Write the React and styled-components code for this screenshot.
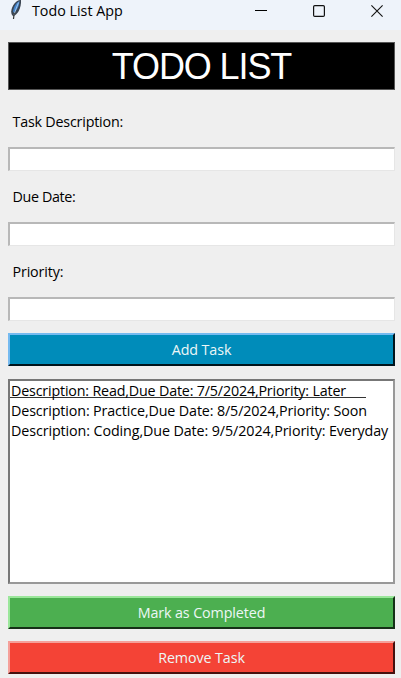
import React from 'react';
import styled, { createGlobalStyle } from 'styled-components';

const GlobalStyle = createGlobalStyle`
  * { box-sizing: border-box; }
  body { margin: 0; overflow: hidden; background: #efefef; }
`;

const Window = styled.div`
  width: 401px;
  height: 678px;
  overflow: hidden;
  background: #efefef;
  color: #000;
  font: 14.3px/20px "Open Sans", "Noto Sans", sans-serif;
`;

const TitleBar = styled.header`
  display: flex;
  align-items: flex-start;
  height: 30px;
  padding-left: 8px;
  background: #eef3fa;
`;

const AppTitle = styled.span`
  flex: 1;
  padding-left: 8px;
  font-size: 14.3px;
  line-height: 21px;
`;

const Controls = styled.div`
  display: flex;
  gap: 46px;
  padding: 5px 18.5px 0 0;
  svg { display: block; }
`;

const Content = styled.main`
  display: flex;
  flex-direction: column;
  padding: 12px 6px 0 8px;
`;

const Heading = styled.h1`
  margin: 0;
  height: 48px;
  border: 1px solid #555;
  background: #000;
  color: #fff;
  font: 36px/48px "Liberation Sans", Arial, sans-serif;
  letter-spacing: -1.1px;
  text-align: center;
`;

const Fields = styled.section`
  display: flex;
  flex-direction: column;
  gap: 16px;
  height: 243px;
  padding-top: 22px;
`;

const Field = styled.label`
  display: flex;
  flex-direction: column;
`;

const FieldLabel = styled.span`
  height: 35px;
  padding-left: 4.5px;
  letter-spacing: ${(p) => p.$tracking}px;
`;

const Input = styled.input`
  width: 100%;
  height: 24px;
  padding: 0 4px;
  border: solid;
  border-width: 2px 1px 1px 2px;
  border-color: #b8b8b8 #e6e6e6 #e6e6e6 #b8b8b8;
  border-radius: 0;
  background: #fff;
  font: inherit;
  outline: none;
`;

const Button = styled.button`
  height: 33px;
  flex: none;
  padding: 0;
  border: 2px solid;
  border-color: ${(p) => `${p.$light} ${p.$dark} ${p.$dark} ${p.$light}`};
  border-radius: 0;
  background: ${(p) => p.$fill};
  color: #edf7f7;
  font: inherit;
  line-height: 28px;
  letter-spacing: ${(p) => p.$tracking}px;
  text-align: center;
`;

const TaskList = styled.ul`
  height: 205px;
  margin: 13px 0 12px;
  padding: 0;
  overflow: hidden;
  list-style: none;
  border: 2px solid;
  border-color: #777 #999 #999 #777;
  background: #fff;
`;

const Task = styled.li`
  width: fit-content;
  height: 20px;
  padding-left: 1px;
  white-space: pre;
  line-height: 20px;
  letter-spacing: ${(p) => p.$tracking}px;
`;

const ActiveTask = styled(Task)`
  width: 356px;
  height: 17px;
  margin-bottom: 3px;
  border-bottom: 1px solid #333;
`;

const Actions = styled.div`
  display: flex;
  flex-direction: column;
  gap: 12px;
`;

const Feather = () => (
  <svg width="16" height="22" viewBox="0 0 16 22">
    <path d="M12.5 0C8 0 3.5 6 3.2 11.5c0 2 .6 3.8 1.8 4.6C9.5 15 13.5 8 13 0Z" fill="#3b4552" />
    <path d="M11.6 1C8 3 5.2 7 5 12.5c3-1 6-5 6.6-11.5Z" fill="#4382cb" />
    <path d="M10.5 2.5 8 9l-2.2 6" stroke="#a9cdec" strokeWidth=".9" fill="none" />
    <path d="m6.2 13-.7 6" stroke="#333" strokeWidth="1.2" />
  </svg>
);

const fields = [
  { label: 'Task Description:', tracking: -0.2 },
  { label: 'Due Date:', tracking: -0.35 },
  { label: 'Priority:', tracking: -0.15 },
];

export default function App() {
  return (
    <>
      <GlobalStyle />
      <Window>
        <TitleBar>
          <Feather />
          <AppTitle>Todo List App</AppTitle>
          <Controls>
            <svg width="12" height="12"><path d="M0 5.5h12" stroke="#000" /></svg>
            <svg width="12" height="12"><rect x=".6" y=".6" width="10.8" height="10.8" rx="1.2" fill="none" stroke="#111" strokeWidth="1.2" /></svg>
            <svg width="12" height="12"><path d="m.4.4 11.2 11.2M11.6.4.4 11.6" stroke="#111" strokeWidth="1.1" /></svg>
          </Controls>
        </TitleBar>
        <Content>
          <Heading>TODO LIST</Heading>
          <Fields>
            {fields.map((f) => (
              <Field key={f.label}>
                <FieldLabel $tracking={f.tracking}>{f.label}</FieldLabel>
                <Input />
              </Field>
            ))}
          </Fields>
          <Button $fill="#008cba" $light="#75baf0" $dark="#00141c" $tracking={-0.1}>Add Task</Button>
          <TaskList>
            <ActiveTask $tracking={-0.18}>Description: Read,Due Date: 7/5/2024,Priority: Later</ActiveTask>
            <Task $tracking={-0.13}>Description: Practice,Due Date: 8/5/2024,Priority: Soon</Task>
            <Task $tracking={-0.1}>Description: Coding,Due Date: 9/5/2024,Priority: Everyday</Task>
          </TaskList>
          <Actions>
            <Button $fill="#4caf50" $light="#9be79b" $dark="#153017" $tracking={-0.1}>Mark as Completed</Button>
            <Button $fill="#f44336" $light="#f5a09a" $dark="#46100e" $tracking={-0.1}>Remove Task</Button>
          </Actions>
        </Content>
      </Window>
    </>
  );
}
